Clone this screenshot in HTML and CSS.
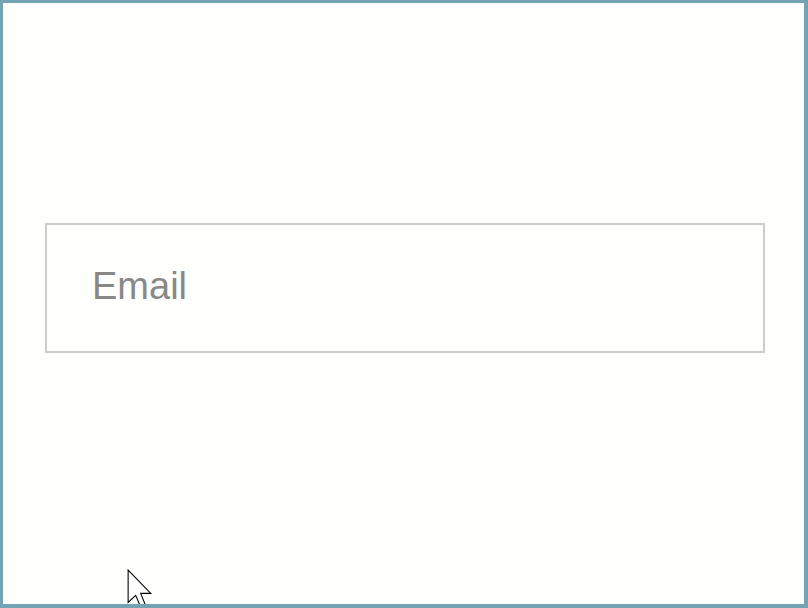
FILE: index.html
```html
<!DOCTYPE html>
<html lang="en">
<head>
<meta charset="utf-8">
<title>Email</title>
<link rel="stylesheet" href="styles.css">
</head>
<body>
<div class="frame">
  <form class="form">
    <input class="email" type="email" placeholder="Email">
  </form>
  <svg class="cursor" width="26" height="41" viewBox="0 0 12 19" aria-hidden="true">
    <path d="M0.5 0.5 L0.5 15.5 L4 12.2 L6.6 18.3 L8.8 17.4 L6.3 11.3 L11 11.3 Z" fill="#fff" stroke="#000" stroke-width="0.5" stroke-linejoin="miter"/>
  </svg>
</div>
</body>
</html>
```

FILE: styles.css
```css
html, body {
  margin: 0;
  padding: 0;
  background: #fefefd;
}

.frame {
  position: relative;
  width: 808px;
  height: 608px;
  box-sizing: border-box;
  border-style: solid;
  border-color: #74a4b3;
  border-width: 3px 4px 4px 3px;
  background: #fefefd;
  overflow: hidden;
}

.form {
  margin: 0;
  padding: 220px 0 0 42px;
}

.email {
  display: block;
  box-sizing: border-box;
  width: 720px;
  height: 130px;
  margin: 0;
  padding: 0 43px 4px 45px;
  border: 2px solid #cccccc;
  border-radius: 0;
  background: #fefefd;
  font-family: "Liberation Sans", Arial, sans-serif;
  font-size: 38px;
  color: #333;
  outline: none;
}

.email::placeholder {
  color: #888888;
  opacity: 1;
}

.cursor {
  position: absolute;
  left: 124px;
  top: 566px;
}
```
